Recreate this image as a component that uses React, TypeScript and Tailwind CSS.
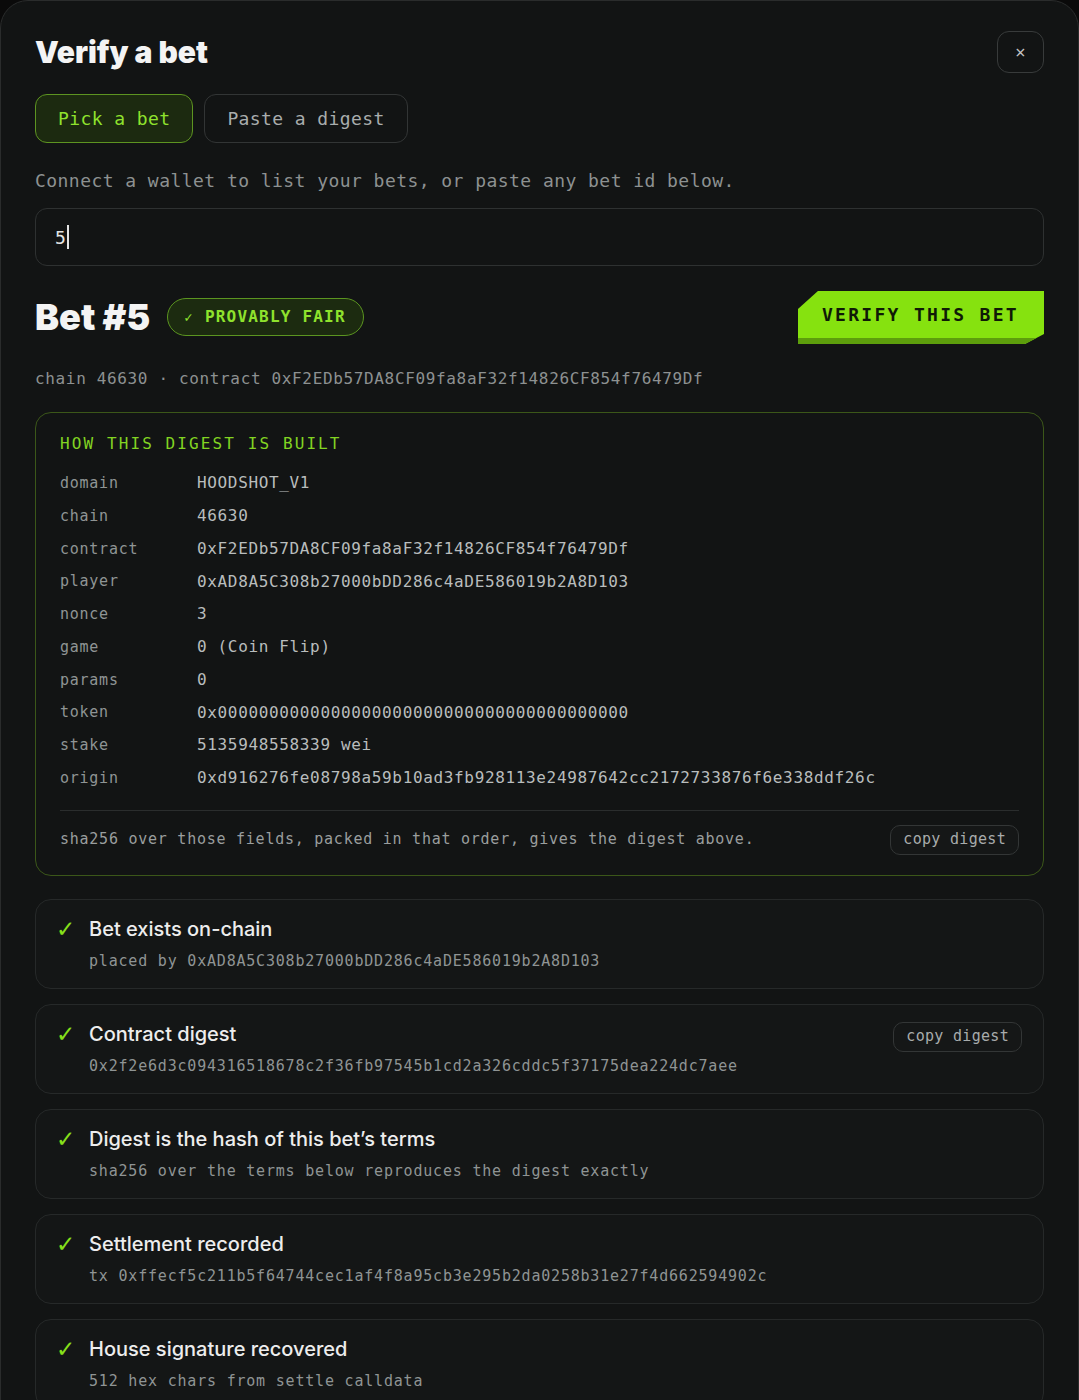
import React from 'react';

const mono = "font-['DejaVu_Sans_Mono','Liberation_Mono',monospace]";
const sans = "font-['Inter','Noto_Sans',sans-serif]";

const fields: [string, string][] = [
  ['domain', 'HOODSHOT_V1'],
  ['chain', '46630'],
  ['contract', '0xF2EDb57DA8CF09fa8aF32f14826CF854f76479Df'],
  ['player', '0xAD8A5C308b27000bDD286c4aDE586019b2A8D103'],
  ['nonce', '3'],
  ['game', '0 (Coin Flip)'],
  ['params', '0'],
  ['token', '0x0000000000000000000000000000000000000000'],
  ['stake', '5135948558339 wei'],
  ['origin', '0xd916276fe08798a59b10ad3fb928113e24987642cc2172733876f6e338ddf26c'],
];

type Check = { title: string; detail: string; copy?: boolean };

const checks: Check[] = [
  { title: 'Bet exists on-chain', detail: 'placed by 0xAD8A5C308b27000bDD286c4aDE586019b2A8D103' },
  {
    title: 'Contract digest',
    detail: '0x2f2e6d3c094316518678c2f36fb97545b1cd2a326cddc5f37175dea224dc7aee',
    copy: true,
  },
  { title: 'Digest is the hash of this bet\u2019s terms', detail: 'sha256 over the terms below reproduces the digest exactly' },
  { title: 'Settlement recorded', detail: 'tx 0xffecf5c211b5f64744cec1af4f8a95cb3e295b2da0258b31e27f4d662594902c' },
  { title: 'House signature recovered', detail: '512 hex chars from settle calldata' },
];

const CopyButton: React.FC = () => (
  <button
    className={`${mono} h-[30px] shrink-0 rounded-[10px] border border-[#333636] bg-[#151717] px-[12px] text-[15px] tracking-[0.3px] text-[#a8acac]`}
  >
    copy digest
  </button>
);

const CheckRow: React.FC<{ item: Check }> = ({ item }) => (
  <div className="flex h-[90px] items-start rounded-[16px] border border-[#262929] bg-[#141616] pl-[20px] pr-[21px] pt-[16px]">
    <span className="w-[33px] shrink-0 font-['DejaVu_Sans',sans-serif] text-[23px] leading-[26px] text-[#86e01a]">
      ✓
    </span>
    <div className="min-w-0 flex-1">
      <div className={`${sans} text-[20px] font-medium leading-[26px] text-[#ededed]`}>{item.title}</div>
      <div className={`${mono} mt-[8px] text-[15px] leading-[22px] tracking-[0.8px] text-[#8f9494]`}>{item.detail}</div>
    </div>
    {item.copy && (
      <div className="pt-[1px]">
        <CopyButton />
      </div>
    )}
  </div>
);

export default function App() {
  return (
    <div className="min-h-screen bg-[#0a0a0a]">
      <div className="min-h-[1440px] rounded-t-[28px] border border-[#2a2c2c] bg-[#121414] px-[34px] pt-[30px]">
        {/* header */}
        <div className="flex items-center justify-between">
          <h1 className={`${sans} text-[30px] font-black leading-[36px] tracking-[0px] text-[#f4f4f4]`}>Verify a bet</h1>
          <button className="flex h-[42px] w-[47px] items-center justify-center rounded-[12px] border border-[#383b3b] text-[18px] text-[#c4c4c4]">
            ×
          </button>
        </div>

        {/* mode tabs */}
        <div className={`${mono} mt-[21px] flex gap-[11px] text-[18px] tracking-[0.4px]`}>
          <button className="h-[49px] rounded-[12px] border border-[#5d9421] bg-[#1c2a10] px-[22px] text-[#8fe22d]">
            Pick a bet
          </button>
          <button className="h-[49px] rounded-[12px] border border-[#323535] px-[22px] text-[#a9adad]">
            Paste a digest
          </button>
        </div>

        <p className={`${mono} mt-[26px] text-[18px] leading-[24px] tracking-[0.45px] text-[#8d9191]`}>
          Connect a wallet to list your bets, or paste any bet id below.
        </p>

        <div className={`${mono} mt-[15px] flex h-[58px] items-center rounded-[12px] border border-[#2e3131] px-[19px] text-[18px] text-[#e4e4e4]`}>
          5<span className="ml-[1px] h-[24px] w-[2px] bg-[#e4e4e4]" />
        </div>

        {/* bet summary */}
        <div className="mt-[25px] flex h-[53px] items-center justify-between">
          <div className="flex items-center gap-[17px] pb-[1px]">
            <h2 className={`${sans} text-[36px] font-black tracking-[0px] text-[#f4f4f4]`}>Bet #5</h2>
            <span
              className={`${mono} flex h-[38px] items-center rounded-full border border-[#5b9520] bg-[#1c2b10] pl-[16px] pr-[17px] text-[16px] font-bold tracking-[1.2px] text-[#8fe22d]`}
            >
              <span className="mr-[11px] text-[14px]">✓</span>PROVABLY FAIR
            </span>
          </div>
          <button
            className={`${mono} h-[53px] bg-[#86e20f] pb-[6px] pl-[24px] pr-[25px] text-[18px] font-bold tracking-[2.3px] text-[#0f1a06] shadow-[inset_0_-6px_0_#5d9e0c] [clip-path:polygon(20px_0,100%_0,100%_calc(100%_-_10px),calc(100%_-_19px)_100%,0_100%,0_18px)]`}
          >
            VERIFY THIS BET
          </button>
        </div>

        <p className={`${mono} mt-[23px] text-[16px] leading-[24px] tracking-[0.65px] text-[#8d9191]`}>
          chain 46630 · contract 0xF2EDb57DA8CF09fa8aF32f14826CF854f76479Df
        </p>

        {/* digest breakdown */}
        <div className="mt-[21px] rounded-[16px] border border-[#3b5719] px-[24px] pb-[20px] pt-[21px]">
          <div className={`${mono} text-[16px] leading-[20px] tracking-[2.1px] text-[#82d422]`}>HOW THIS DIGEST IS BUILT</div>
          <div className="mt-[13px]">
            {fields.map(([k, v]) => (
              <div key={k} className={`${mono} flex h-[32.75px] items-center`}>
                <span className="w-[137px] shrink-0 text-[15px] tracking-[0.75px] text-[#8f9494]">{k}</span>
                <span className="text-[16px] tracking-[0.65px] text-[#b9bdbd]">{v}</span>
              </div>
            ))}
          </div>
          <div className="mt-[15px] flex items-center justify-between border-t border-[#2a2d2d] pt-[14px]">
            <span className={`${mono} text-[15px] tracking-[0.75px] text-[#9a9e9e]`}>
              sha256 over those fields, packed in that order, gives the digest above.
            </span>
            <CopyButton />
          </div>
        </div>

        {/* verification checks */}
        <div className="mt-[23px] flex flex-col gap-[15px]">
          {checks.map((c) => (
            <CheckRow key={c.title} item={c} />
          ))}
        </div>
      </div>
    </div>
  );
}
